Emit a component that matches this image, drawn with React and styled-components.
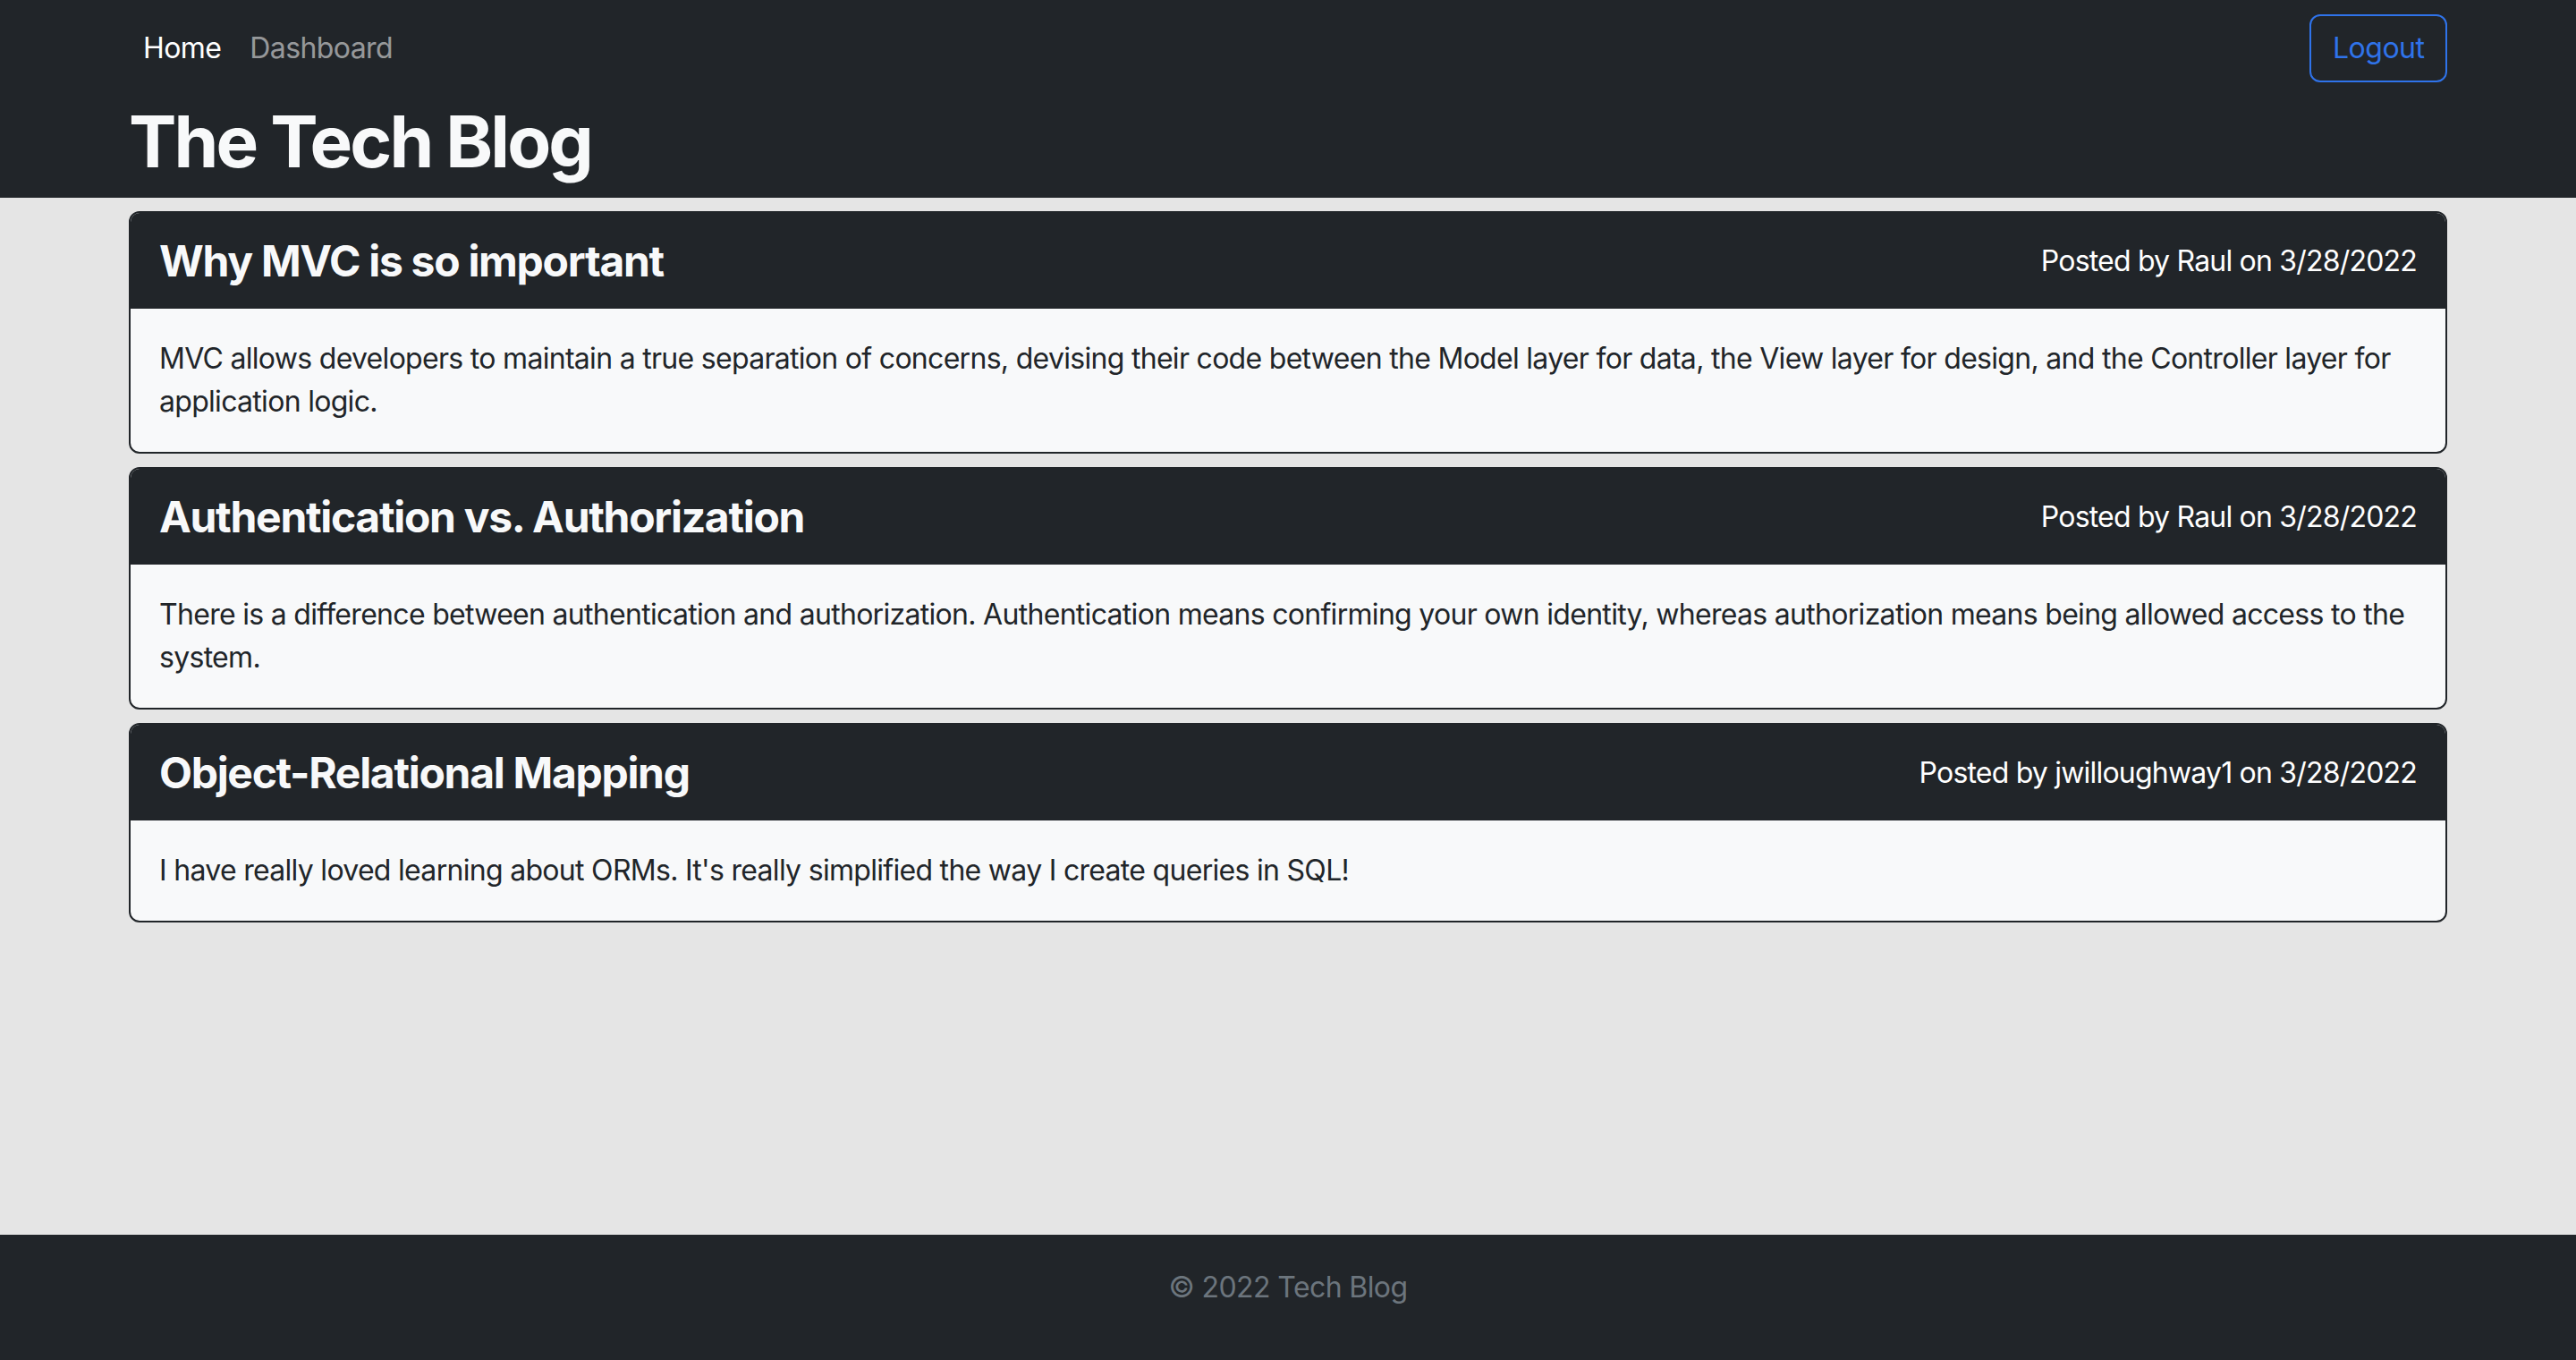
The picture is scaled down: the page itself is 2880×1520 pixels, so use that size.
import React from "react";
import styled, { createGlobalStyle } from "styled-components";

const GlobalStyle = createGlobalStyle`
  html, body { margin: 0; padding: 0; }
  body {
    font-family: Inter, "Noto Sans", "Liberation Sans", sans-serif;
    font-size: 32px;
    line-height: 1.5;
    color: #212529;
    background: #e5e5e5;
  }
  #root { min-height: 100vh; display: flex; flex-direction: column; }
`;

const Page = styled.div`
  min-height: 100vh;
  display: flex;
  flex-direction: column;
`;

const Container = styled.div`
  width: 2592px;
  margin: 0 auto;
`;

const Header = styled.header`
  background: #212529;
  padding-bottom: 15px;
`;

const NavBar = styled.nav`
  display: flex;
  align-items: center;
  justify-content: space-between;
  padding: 14px 0 15px;
`;

const NavLinks = styled.div`
  display: flex;
  align-items: center;
`;

const NavLink = styled.a`
  padding: 16px;
  font-size: 32px;
  line-height: 48px;
  letter-spacing: -0.6px;
  text-decoration: none;
  color: ${(p) => (p.$active ? "#ffffff" : "rgba(255,255,255,0.55)")};
`;

const LogoutButton = styled.button`
  font-family: inherit;
  font-size: 32px;
  line-height: 48px;
  letter-spacing: -0.5px;
  padding: 12px 24px;
  height: 76px;
  width: 154px;
  background: transparent;
  color: #2f73ea;
  border: 2px solid #2f73ea;
  border-radius: 12px;
`;

const Title = styled.h1`
  margin: 1px 0 0;
  font-size: 80px;
  line-height: 96px;
  font-weight: 700;
  letter-spacing: -2.9px;
  color: #f8f9fa;
`;

const Main = styled.main`
  flex: 1;
  padding-top: 15px;
`;

const PostList = styled.div`
  display: flex;
  flex-direction: column;
  gap: 15px;
`;

const Card = styled.article`
  border: 2px solid #212529;
  border-radius: 12px;
  overflow: hidden;
  background: #f8f9fa;
`;

const CardHeader = styled.div`
  background: #212529;
  color: #ffffff;
  height: 107px;
  padding: 0 32px;
  display: flex;
  align-items: center;
  justify-content: space-between;
`;

const PostTitle = styled.h2`
  margin: 0;
  font-size: 48px;
  line-height: 58px;
  font-weight: 700;
  letter-spacing: -1.3px;
  color: #f8f9fa;
`;

const Meta = styled.span`
  font-size: 32px;
  letter-spacing: -0.8px;
  color: #ffffff;
`;

const CardBody = styled.p`
  margin: 0;
  padding: 32px;
  font-size: 32px;
  line-height: 48px;
  letter-spacing: -0.7px;
  color: #212529;
`;

const Footer = styled.footer`
  background: #212529;
  height: 140px;
  display: flex;
  align-items: center;
  justify-content: center;
  padding-bottom: 22px;
  box-sizing: border-box;
`;

const FooterText = styled.span`
  color: #6c757d;
  font-size: 32px;
  letter-spacing: -0.6px;
`;

const posts = [
  {
    title: "Why MVC is so important",
    author: "Raul",
    date: "3/28/2022",
    body:
      "MVC allows developers to maintain a true separation of concerns, devising their code between the Model layer for data, the View layer for design, and the Controller layer for application logic.",
  },
  {
    title: "Authentication vs. Authorization",
    author: "Raul",
    date: "3/28/2022",
    body:
      "There is a difference between authentication and authorization. Authentication means confirming your own identity, whereas authorization means being allowed access to the system.",
  },
  {
    title: "Object-Relational Mapping",
    author: "jwilloughway1",
    date: "3/28/2022",
    body:
      "I have really loved learning about ORMs. It's really simplified the way I create queries in SQL!",
  },
];

export default function App() {
  return (
    <Page>
      <GlobalStyle />
      <Header>
        <Container>
          <NavBar>
            <NavLinks>
              <NavLink $active href="#">Home</NavLink>
              <NavLink href="#">Dashboard</NavLink>
            </NavLinks>
            <LogoutButton>Logout</LogoutButton>
          </NavBar>
          <Title>The Tech Blog</Title>
        </Container>
      </Header>
      <Main>
        <Container>
          <PostList>
            {posts.map((p) => (
              <Card key={p.title}>
                <CardHeader>
                  <PostTitle>{p.title}</PostTitle>
                  <Meta>
                    Posted by {p.author} on {p.date}
                  </Meta>
                </CardHeader>
                <CardBody>{p.body}</CardBody>
              </Card>
            ))}
          </PostList>
        </Container>
      </Main>
      <Footer>
        <FooterText>© 2022 Tech Blog</FooterText>
      </Footer>
    </Page>
  );
}
